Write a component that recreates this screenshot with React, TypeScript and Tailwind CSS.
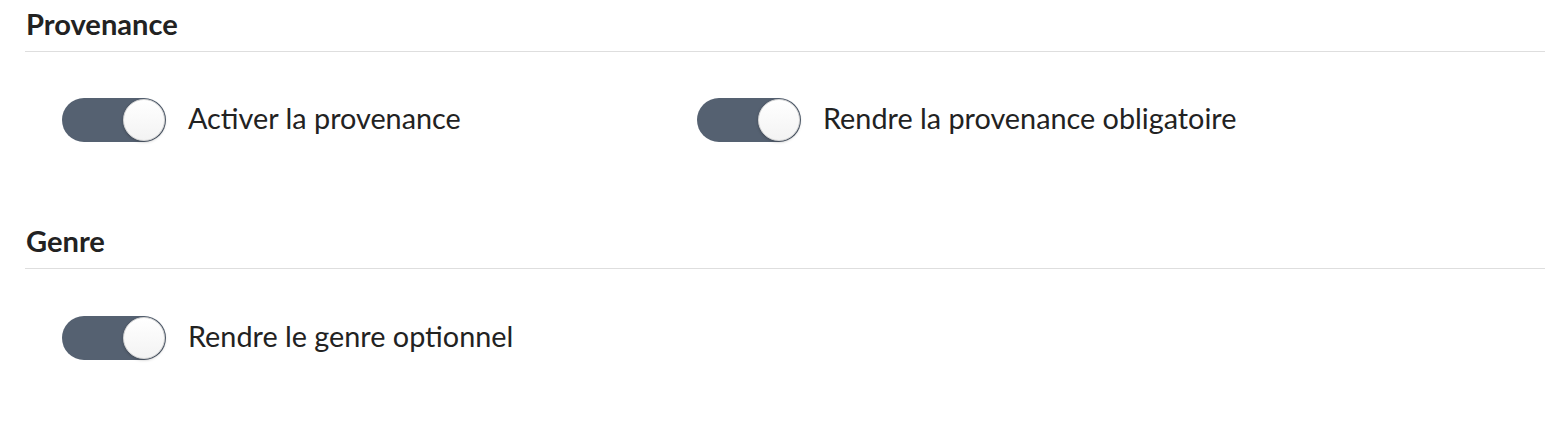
import React from "react";

function Toggle() {
  return (
    <div className="relative h-[44px] w-[104px] shrink-0 rounded-full bg-[#556171]">
      <div className="absolute right-[1px] top-[1px] h-[42px] w-[42px] rounded-full border border-[#d6d6d6] bg-gradient-to-b from-white to-[#f3f3f3] shadow-[0_1px_3px_rgba(0,0,0,0.25)]" />
    </div>
  );
}

function Item({ label }: { label: string }) {
  return (
    <div className="flex items-center gap-[22px]">
      <Toggle />
      <span className="pb-[4px] text-[28.8px] leading-[34px] text-[#222]">{label}</span>
    </div>
  );
}

function Heading({ title }: { title: string }) {
  return (
    <div className="border-b border-[#dedede] pb-[10px]">
      <h2 className="pl-[1px] text-[29.1px] font-bold leading-[34px] text-[#222]">{title}</h2>
    </div>
  );
}

export default function App() {
  return (
    <div
      className="min-h-[422px] w-full bg-white pl-[25px] pr-[1px] pt-[7px]"
      style={{ fontFamily: "Lato, 'Open Sans', sans-serif" }}
    >
      <Heading title="Provenance" />
      <div className="mt-[46px] flex pl-[37px]">
        <div className="w-[635px]">
          <Item label="Activer la provenance" />
        </div>
        <Item label="Rendre la provenance obligatoire" />
      </div>
      <div className="mt-[82px]">
        <Heading title="Genre" />
      </div>
      <div className="mt-[47px] flex pl-[37px]">
        <Item label="Rendre le genre optionnel" />
      </div>
    </div>
  );
}
